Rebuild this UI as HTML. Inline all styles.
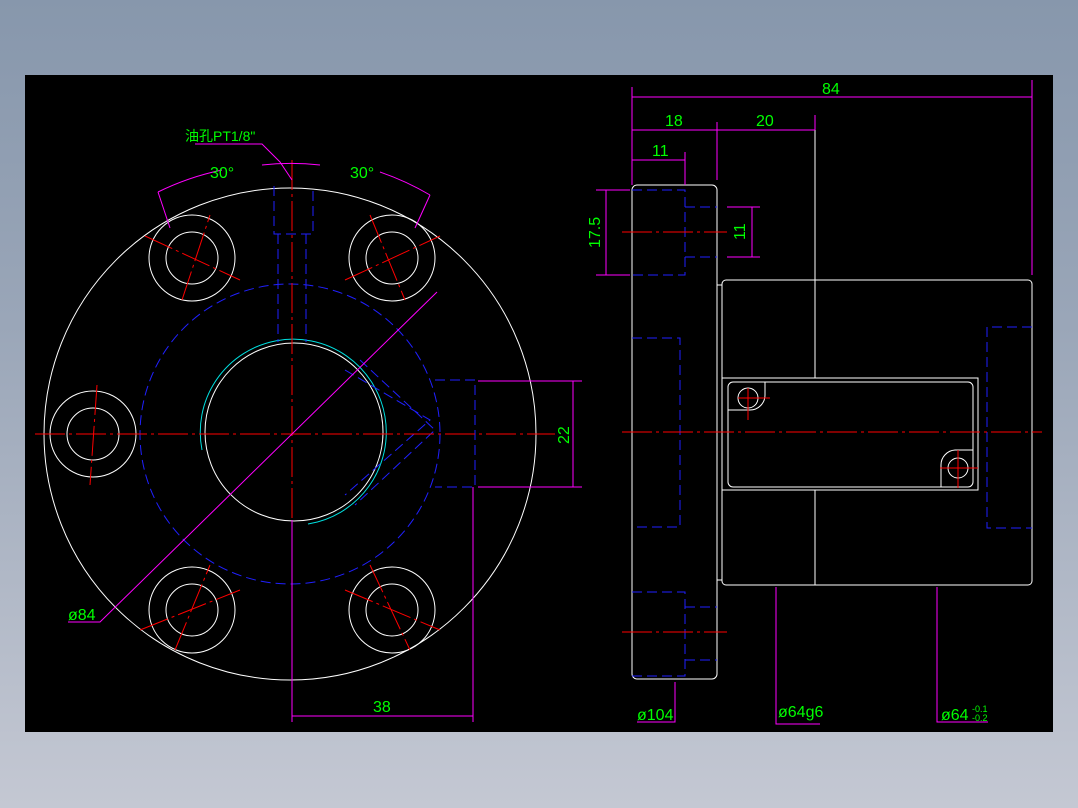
<!DOCTYPE html>
<html><head><meta charset="utf-8"><style>
html,body{margin:0;padding:0;width:1078px;height:808px;overflow:hidden;background:linear-gradient(#8797ac 0%,#9aa6b8 40%,#c4c8d3 100%);}
svg{position:absolute;left:0;top:0}
text{font-family:"Liberation Sans","Noto Sans CJK SC",sans-serif;fill:#00ff00;font-size:16px}
</style></head><body>
<svg width="1078" height="808" viewBox="0 0 1078 808">
<rect x="25" y="75" width="1028" height="657" fill="#000"/>
<g fill="none" stroke-width="1">
<!-- LEFT VIEW -->
<g stroke="#fff">
<circle cx="290" cy="434" r="246"/>
<circle cx="294" cy="432" r="89"/>
<circle cx="192" cy="258" r="43"/><circle cx="192" cy="258" r="26"/>
<circle cx="392" cy="258" r="43"/><circle cx="392" cy="258" r="26"/>
<circle cx="93" cy="434" r="43"/><circle cx="93" cy="434" r="26"/>
<circle cx="192" cy="610" r="43"/><circle cx="192" cy="610" r="26"/>
<circle cx="392" cy="610" r="43"/><circle cx="392" cy="610" r="26"/>
</g>
<path d="M202,450 A93,93 0 1 1 308,524" stroke="#00e0e0"/>
<g stroke="#2020ff" stroke-dasharray="10,5">
<circle cx="290" cy="434" r="150"/>
<path d="M274,186V234H313V186M278,234V342M306,234V342"/>
<path d="M435,380H475V487H435"/>
<path d="M345,370L430,420L345,495"/>
<path d="M360,360L435,430L355,505"/>
</g>
<g stroke="#ff0000" stroke-dasharray="30,4,3,4">
<path d="M35,434H555M292,160V700"/>
<path d="M145,236L240,280M182,300L210,215M345,280L440,236M370,215L405,300"/>
<path d="M140,630L240,590M175,650L210,565M345,590L440,630M370,565L410,650"/>
<path d="M97,385L90,485"/>
</g>
<g stroke="#ff00ff">
<path d="M68,622H100L437,292"/>
<path d="M195,144H262L280,162L292,180"/>
<path d="M158,192A270,270 0 0 1 222,170M262,165A270,270 0 0 1 320,165M380,172A270,270 0 0 1 430,195"/>
<path d="M158,192L170,228M430,195L415,228"/>
<path d="M478,381H582M478,487H582M573,381V487"/>
<path d="M292,520V722M473,487V722M292,716H473"/>
</g>
<text x="185" y="141" style="font-size:14px">油孔PT1/8"</text>
<text x="210" y="178">30°</text>
<text x="350" y="178">30°</text>
<text x="68" y="620">ø84</text>
<text x="373" y="712">38</text>
<text transform="translate(569,444) rotate(-90)">22</text>
<!-- RIGHT VIEW -->
<g stroke="#fff">
<rect x="632" y="185" width="85" height="494" rx="5"/>
<rect x="722" y="280" width="310" height="305" rx="4"/>
<path d="M717,285H722M717,580H722M815,280V378M815,490V585M815,122V280"/>
<rect x="722" y="378" width="256" height="112"/>
<rect x="728" y="382" width="245" height="105" rx="5"/>
<path d="M728,410H750A15,15 0 0 0 765,395V382M973,450H955A15,15 0 0 0 941,465V487"/>
<circle cx="748" cy="398" r="10"/><circle cx="958" cy="468" r="10"/>
</g>
<g stroke="#2020ff" stroke-dasharray="10,5">
<path d="M632,190H685V275H632M685,207H717M685,257H717"/>
<path d="M632,338H680V527H632"/>
<path d="M1032,327H987V528H1032"/>
<path d="M632,592H685V676H632M685,607H717M685,660H717"/>
</g>
<g stroke="#ff0000" stroke-dasharray="30,4,3,4">
<path d="M622,432H1042M622,232H727M622,632H727"/>
</g>
<g stroke="#ff0000"><path d="M738,398H770M748,388V420M940,468H978M958,450V488"/></g>
<g stroke="#ff00ff">
<path d="M632,87V185M1032,80V275M717,122V180M685,152V185M815,115V130"/>
<path d="M632,97H1032M632,130H815M632,160H685"/>
<path d="M596,190H630M596,275H630M606,190V275"/>
<path d="M727,207H760M727,257H760M752,207V257"/>
<path d="M637,722H675V682M776,587V724H820M937,587V722H988"/>
</g>
<text x="822" y="94">84</text>
<text x="665" y="126">18</text>
<text x="756" y="126">20</text>
<text x="652" y="156">11</text>
<text transform="translate(600,248) rotate(-90)">17.5</text>
<text transform="translate(745,240) rotate(-90)">11</text>
<text x="637" y="720">ø104</text>
<text x="778" y="717">ø64g6</text>
<text x="941" y="720">ø64</text>
<text x="972" y="712" style="font-size:9px">-0.1</text>
<text x="972" y="721" style="font-size:9px">-0.2</text>
</g>
</svg>
</body></html>
